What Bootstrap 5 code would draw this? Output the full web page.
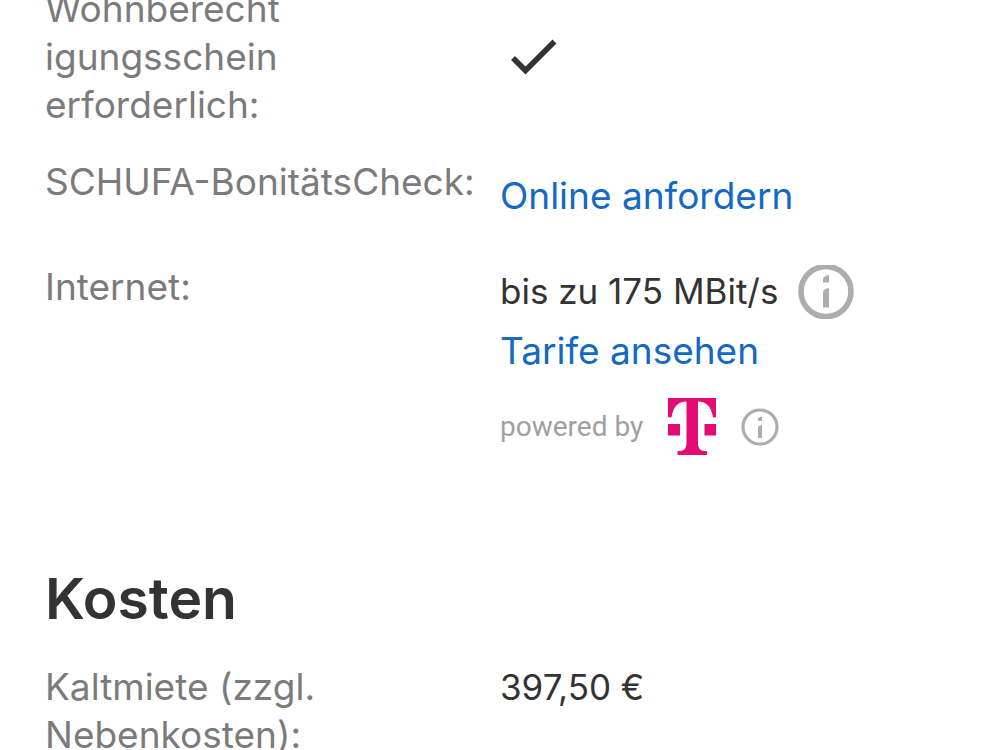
<!DOCTYPE html>
<html lang="de">
<head>
<meta charset="utf-8">
<meta name="viewport" content="width=device-width, initial-scale=1">
<title>Wohnungsdetails</title>
<link rel="stylesheet" href="https://cdn.jsdelivr.net/npm/bootstrap@5.3.0/dist/css/bootstrap.min.css">
<style>
  html { overflow: hidden; }
  body { font-family: Inter, "Noto Sans", sans-serif; font-size: 37px; line-height: 48px; color: #333; background: #fff; }
  /* The list is scrolled up by part of its first line */
  .expose { margin-top: -15px; }
  .row > dt { font-weight: 400; color: #7b7b7b; padding-left: 45px; }
  dd { margin: 0; }
  a { color: #1469c3; text-decoration: none; }
  .entry { padding-bottom: 29px; }
  .entry-schufa { padding-bottom: 43px; }
  .row > .check-cell { padding: 51px 0 0 10px; }
  .link-cell { padding-top: 14px; }
  .fact { font-size: 35px; }
  .speed { gap: 20px; height: 56px; margin-bottom: 8px; }
  .sponsor { gap: 25px; margin-top: 23px; font-family: Roboto, sans-serif; font-size: 28px; color: #a0a0a0; }
  .info-btn { color: #adadad; }
  .section-title { font-size: 57px; font-weight: 600; line-height: 64px; padding-left: 45px; margin: 112px 0 32px; color: #333; }
</style>
</head>
<body>
<main class="expose">
  <dl class="m-0">
    <div class="row g-0 entry">
      <dt class="col-6">Wohnberecht<br>igungsschein<br>erforderlich:</dt>
      <dd class="col-6 check-cell">
        <svg class="d-block" width="48" height="40" viewBox="0 0 48 40" role="img" aria-label="Ja"><path d="M3 22 15.500 34.500 44.500 5.500" fill="none" stroke="#333" stroke-width="5.600"/></svg>
      </dd>
    </div>
    <div class="row g-0 entry-schufa">
      <dt class="col-6">SCHUFA-BonitätsCheck:</dt>
      <dd class="col-6 link-cell"><a href="#">Online anfordern</a></dd>
    </div>
    <div class="row g-0">
      <dt class="col-6">Internet:</dt>
      <dd class="col-6">
        <div class="speed d-flex align-items-center">
          <span class="fact">bis zu 175 MBit/s</span>
          <button type="button" class="info-btn btn p-0 border-0 flex-shrink-0" aria-label="Informationen zur Geschwindigkeit">
            <svg class="d-block" width="56" height="56" viewBox="0 0 56 56"><defs><clipPath id="ring"><path d="M0 2h56v54H0z"/></clipPath></defs><circle cx="28" cy="28.500" r="25" fill="none" stroke="currentColor" stroke-width="5.600" clip-path="url(#ring)"/><path d="M25 15.500q1-2.500 6-3.500v7.500H25zM25 28.500q1-2.500 6-3.500v19.500H25z" fill="currentColor"/></svg>
          </button>
        </div>
        <a class="d-block" href="#">Tarife ansehen</a>
        <div class="sponsor d-flex align-items-center">
          <span>powered by</span>
          <svg width="48" height="57" viewBox="0 0 48 57" role="img" aria-label="Telekom"><path d="M0 0h48v19l-3 .500C43.500 9 38.500 3.500 30 3.500V44c0 7 2 9 9 9.300V57H9.500v-3.700c7-.3 9-2.300 9-9.300V3.500C10 3.500 5 9 3.500 19.500L0 19zM0 26h12v11.500H0zM36.500 26H48v11.500H36.500z" fill="#e20a74"/></svg>
          <button type="button" class="info-btn btn p-0 border-0 flex-shrink-0" aria-label="Informationen zum Anbieter">
            <svg class="d-block" width="38" height="38" viewBox="0 0 38 38"><circle cx="19" cy="19" r="17" fill="none" stroke="currentColor" stroke-width="3.200"/><path d="M17 10.500q1-1.500 4-2v4.500h-4zM17 19q1-1.500 4-2.500v13.500h-4z" fill="currentColor"/></svg>
          </button>
        </div>
      </dd>
    </div>
  </dl>
  <h2 class="section-title">Kosten</h2>
  <dl class="m-0">
    <div class="row g-0">
      <dt class="col-6">Kaltmiete (zzgl.<br>Nebenkosten):</dt>
      <dd class="col-6 fact">397,50 €</dd>
    </div>
  </dl>
</main>
<script src="https://cdn.jsdelivr.net/npm/bootstrap@5.3.0/dist/js/bootstrap.bundle.min.js"></script>
</body>
</html>
